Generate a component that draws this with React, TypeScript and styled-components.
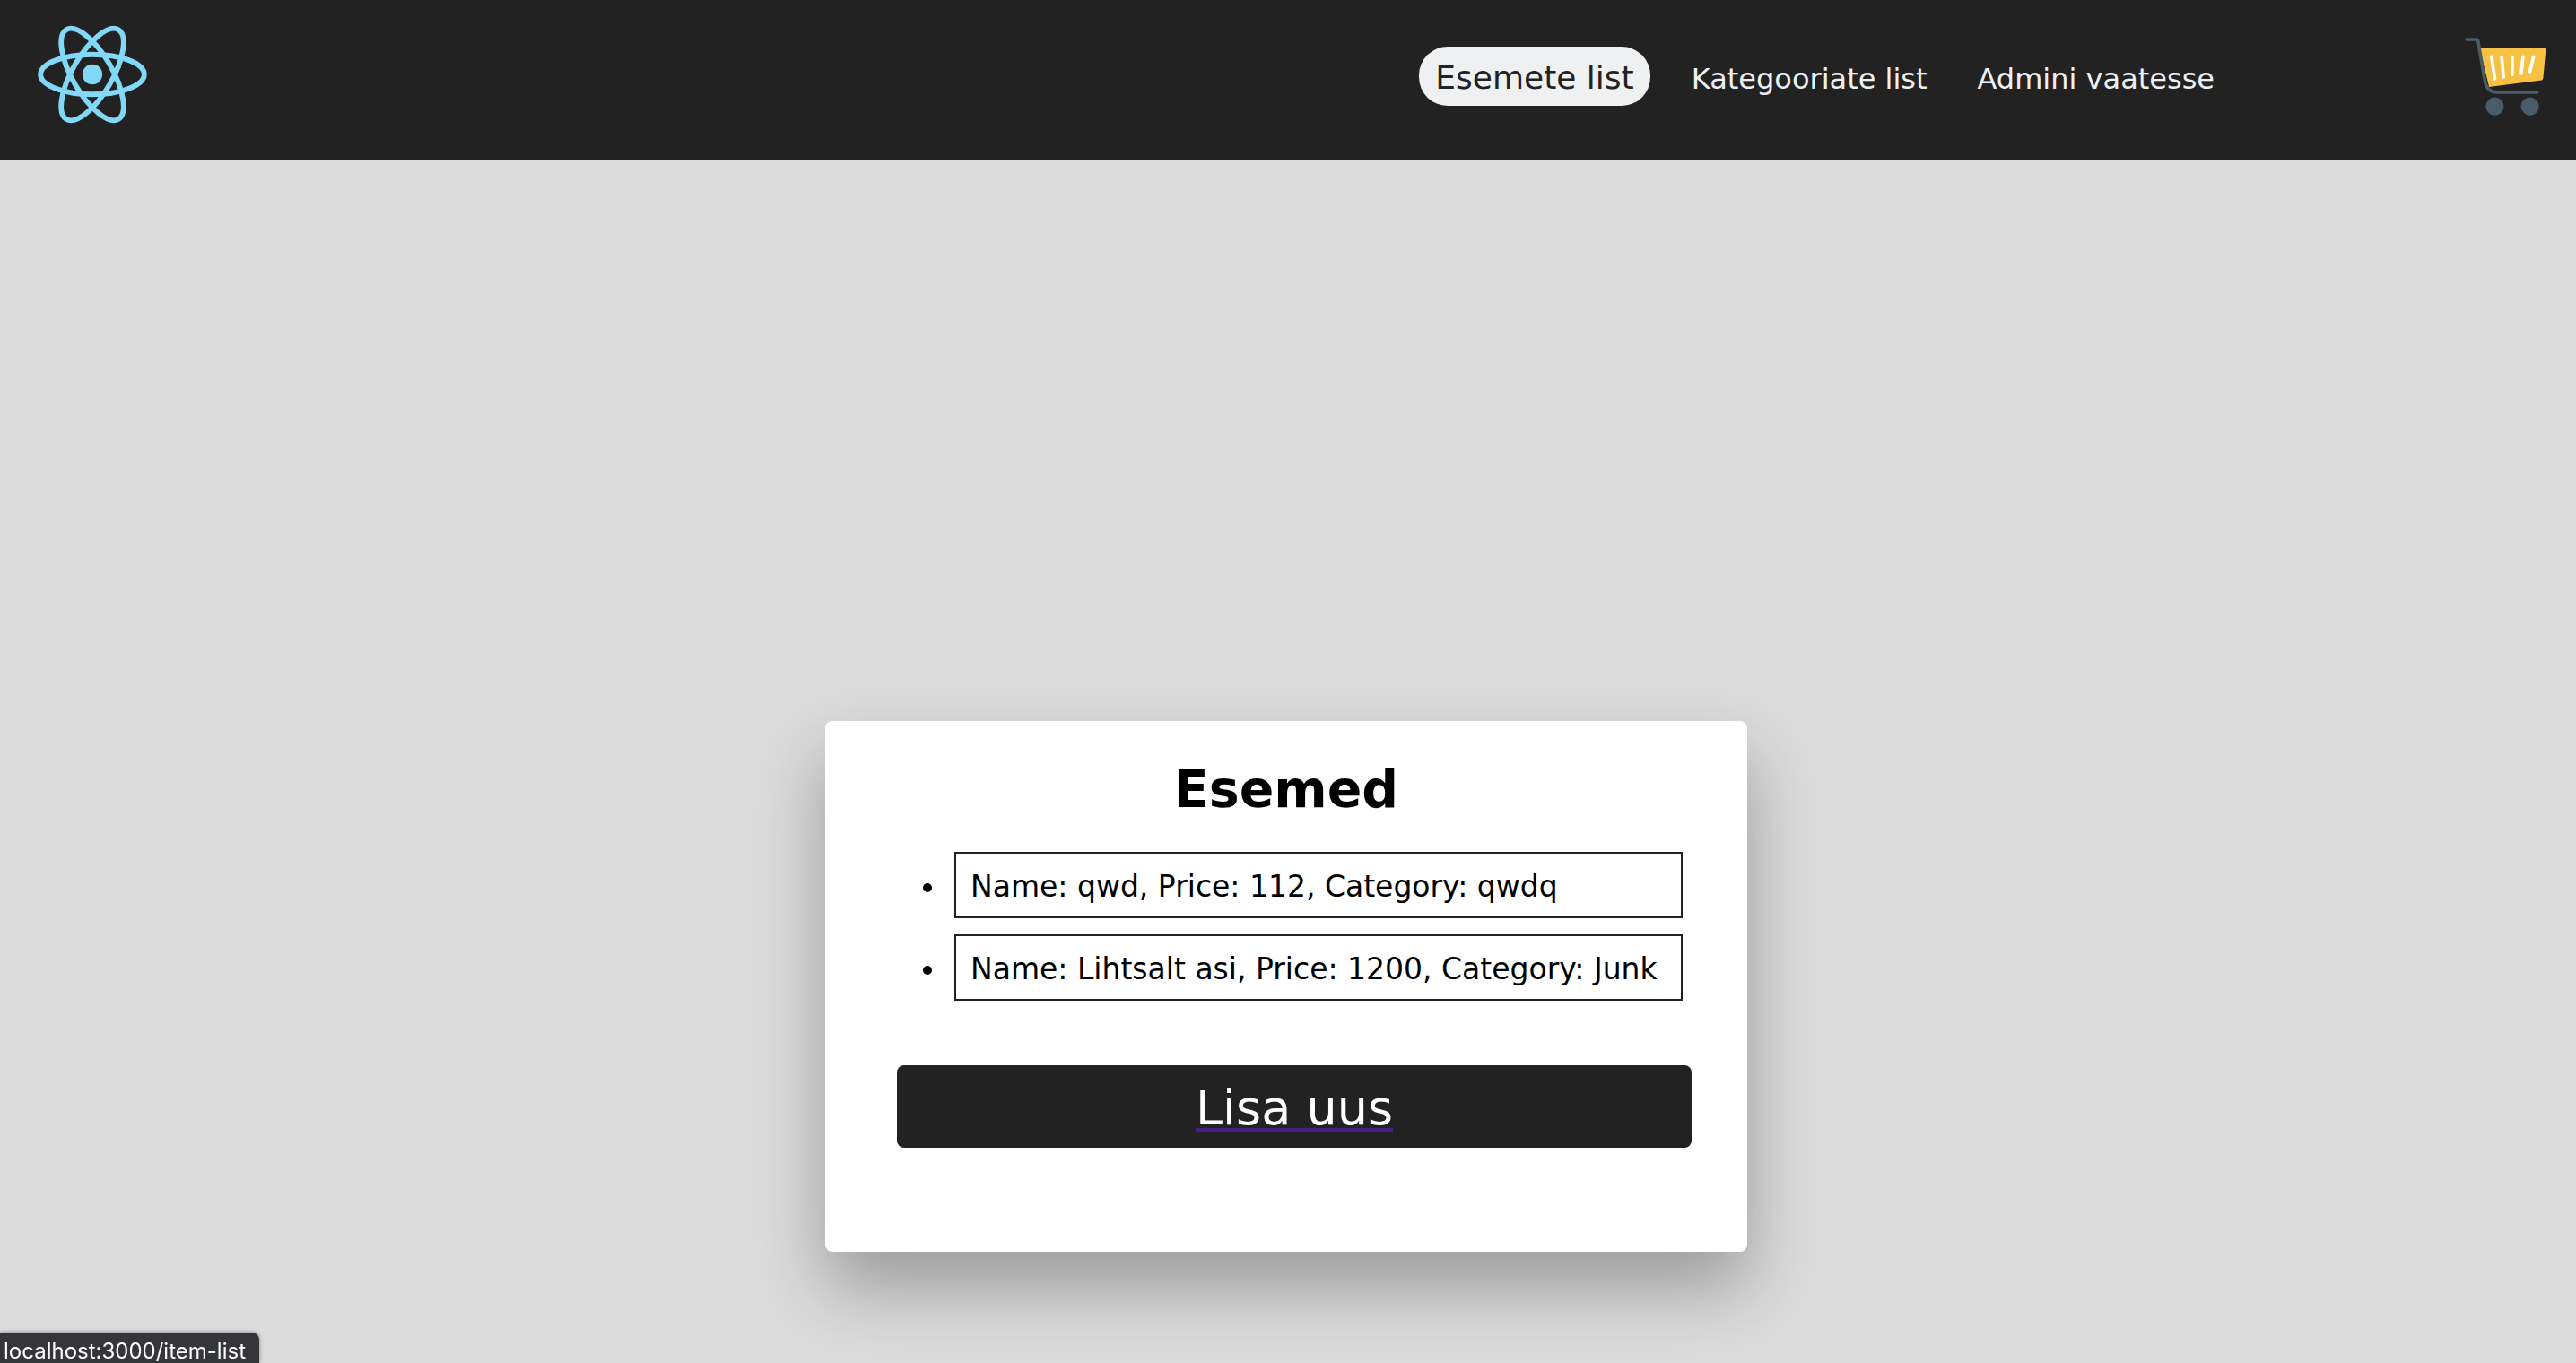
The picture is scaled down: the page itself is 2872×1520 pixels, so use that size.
import React from 'react';
import styled, { createGlobalStyle } from 'styled-components';

const GlobalStyle = createGlobalStyle`
  *, *::before, *::after {
    box-sizing: border-box;
  }

  body {
    margin: 0;
    background: #dcdcdc;
    color: #000;
    font-family: Verdana, 'DejaVu Sans', sans-serif;
    font-size: 32px;
    line-height: 40px;
  }
`;

const Page = styled.div`
  display: flex;
  flex-direction: column;
  min-height: 100vh;
`;

const Header = styled.header`
  display: flex;
  align-items: flex-start;
  height: 178px;
  padding: 28px 33px 0 42px;
  background: #222;
`;

const LogoLink = styled.a`
  display: flex;
  color: #82d8f7;

  svg {
    width: 122px;
    height: 110px;
  }
`;

const Nav = styled.nav`
  display: flex;
  align-items: baseline;
  gap: 20px;
  margin: 24px 261px 0 auto;
`;

const NavLink = styled.a<{ $active?: boolean }>`
  margin-right: ${({ $active }) => ($active ? 8 : 0)}px;
  padding: 15px 18px 11px;
  border-radius: 32px;
  background: ${({ $active }) => ($active ? '#eff0f2' : 'transparent')};
  color: ${({ $active }) => ($active ? '#222' : '#eff0f2')};
  font-size: ${({ $active }) => ($active ? 36 : 32)}px;
  text-decoration: none;
`;

const CartButton = styled.button`
  display: flex;
  margin: 14px 0 0;
  padding: 0;
  border: 0;
  background: none;
  cursor: pointer;

  svg {
    width: 91px;
    height: 87px;
  }
`;

const Main = styled.main`
  display: flex;
  justify-content: center;
  padding: 626px 4px 0 0;
`;

const Card = styled.section`
  width: 1028px;
  max-width: 100%;
  padding: 40px 62px 116px 80px;
  border-radius: 8px;
  background: #fff;
  box-shadow: 0 40px 80px rgba(0, 0, 0, 0.3);
`;

const Title = styled.h1`
  margin: 0;
  padding-right: 18px;
  font-size: 57px;
  line-height: 72px;
  text-align: center;
`;

const ItemList = styled.ul`
  display: flex;
  flex-direction: column;
  gap: 18px;
  margin: 34px 10px 72px 0;
  padding-left: 56px;
  font-size: 33px;
`;

const ItemBox = styled.div`
  margin-left: 8px;
  padding: 17px 16px 13px;
  border: 2px solid #222;
  white-space: nowrap;
`;

const AddLink = styled.a`
  display: block;
  padding: 16px 14px 12px;
  border-radius: 8px;
  background: #222;
  color: #fff;
  font-size: 54px;
  line-height: 64px;
  text-align: center;
  text-decoration: underline #4c1d84 4px;
  text-decoration-skip-ink: none;
  text-underline-offset: 4px;
`;

const StatusBubble = styled.div`
  position: fixed;
  left: 0;
  bottom: 0;
  padding: 8px 15px 0 4px;
  border-radius: 0 8px 0 0;
  background: #35363a;
  box-shadow: 0 0 4px rgba(0, 0, 0, 0.4);
  color: #fff;
  font-family: Inter, 'Liberation Sans', sans-serif;
  font-size: 24px;
  line-height: 26px;
`;

const ReactLogo = () => (
  <svg viewBox="-11.5 -10.23174 23 20.46348" aria-hidden="true">
    <circle r="2.1" fill="currentColor" />
    <g fill="none" stroke="currentColor" strokeWidth="1.1">
      <ellipse rx="10.9" ry="4.2" />
      <ellipse rx="10.9" ry="4.2" transform="rotate(60)" />
      <ellipse rx="10.9" ry="4.2" transform="rotate(120)" />
    </g>
  </svg>
);

const CartIcon = () => (
  <svg viewBox="84 65 272 260" aria-hidden="true">
    <path
      d="M134 101H350Q355 101 354 106L345 202Q344 206 340 207L165 229Z"
      fill="#f7c244"
    />
    <g fill="none" strokeWidth="11" strokeLinecap="round">
      <path
        d="M90 71H124Q127 71 128 75L150 204C154 232 166 247 190 247H325"
        stroke="#4a5c68"
      />
      <path
        d="M173 129L184 202M207 129L213 196M242 129V189M278 129L272 184M313 129L301 178"
        stroke="#fff"
      />
    </g>
    <circle cx="184" cy="294" r="30" fill="#4a5c68" />
    <circle cx="301" cy="294" r="30" fill="#4a5c68" />
  </svg>
);

const links = [
  { label: 'Esemete list', href: '#item-list', active: true },
  { label: 'Kategooriate list', href: '#category-list' },
  { label: 'Admini vaatesse', href: '#admin' },
];

const items = [
  { name: 'qwd', price: 112, category: 'qwdq' },
  { name: 'Lihtsalt asi', price: 1200, category: 'Junk' },
];

export default function App() {
  return (
    <>
      <GlobalStyle />
      <Page>
        <Header>
          <LogoLink href="#home" aria-label="Home">
            <ReactLogo />
          </LogoLink>
          <Nav>
            {links.map(({ label, href, active }) => (
              <NavLink key={href} href={href} $active={active}>
                {label}
              </NavLink>
            ))}
          </Nav>
          <CartButton type="button" aria-label="Cart">
            <CartIcon />
          </CartButton>
        </Header>
        <Main>
          <Card>
            <Title>Esemed</Title>
            <ItemList>
              {items.map(({ name, price, category }) => (
                <li key={name}>
                  <ItemBox>{`Name: ${name}, Price: ${price}, Category: ${category}`}</ItemBox>
                </li>
              ))}
            </ItemList>
            <AddLink href="#add-item">Lisa uus</AddLink>
          </Card>
        </Main>
        <StatusBubble>localhost:3000/item-list</StatusBubble>
      </Page>
    </>
  );
}
